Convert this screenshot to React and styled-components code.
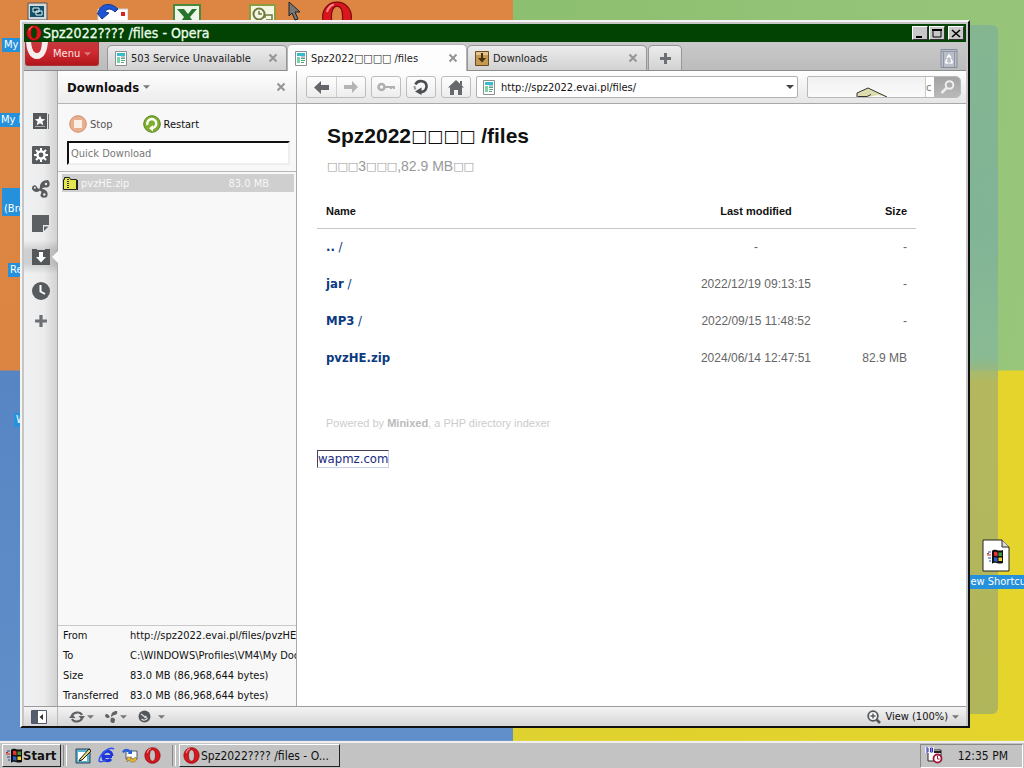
import React from "react";
import styled, { createGlobalStyle, css } from "styled-components";

const UI_FONT = '"DejaVu Sans Condensed", "DejaVu Sans", "Noto Sans", sans-serif';
const PAGE_FONT = '"Liberation Sans", "DejaVu Sans", sans-serif';

const GlobalStyle = createGlobalStyle`
  * { box-sizing: border-box; }
  body { margin: 0; font-family: ${UI_FONT}; font-size: 11px; color: #111; }
  button, input { font: inherit; color: inherit; margin: 0; }
  button { padding: 0; border: 0; background: none; white-space: nowrap; }
  svg { display: block; flex: none; }
`;

/* ---------- desktop ---------- */

const Screen = styled.div`
  display: flex;
  flex-direction: column;
  height: 100vh;
  overflow: hidden;
`;

const Desktop = styled.main`
  position: relative;
  flex: 1;
  min-height: 0;
  overflow: hidden;
  background:
    linear-gradient(#dd8643, #dc8542) 0 0 / 50.1% 50% no-repeat,
    linear-gradient(100deg, #8dbf70, #98c67b) 100% 0 / 50% 50% no-repeat,
    linear-gradient(#5785c4, #618fc9) 0 100% / 50.1% 51% no-repeat,
    linear-gradient(90deg, #dfd12f, #e4d42c) 100% 100% / 50% 51% no-repeat;
`;

const Ribbon = styled.div`
  position: absolute;
  top: 25px;
  right: 26px;
  bottom: 27px;
  width: 60px;
  border-radius: 6px;
  background: linear-gradient(#7fb297cc, #7cb09dcc 30%, #86b89acc 48%, #a8b06acc 52%, #a3ae66cc);
`;

const Shortcut = styled.button`
  position: absolute;
  left: ${(p) => p.$x}px;
  top: ${(p) => p.$y}px;
  display: flex;
  flex-direction: column;
  align-items: center;
  gap: 3px;
`;

const ShortcutLabel = styled.span`
  padding: 0 2px;
  background: #2590dc;
  color: #fff;
  line-height: 14px;
  text-align: center;
  white-space: pre;
`;

const Pointer = styled.div`
  position: absolute;
  left: 288px;
  top: 1px;
  z-index: 3;
`;

/* ---------- window ---------- */

const Window = styled.section`
  position: absolute;
  inset: 20px 54px 13px 20px;
  display: flex;
  flex-direction: column;
  padding: 2px 2px 0;
  background: #c6c6c6;
  border: 2px solid;
  border-color: #f4f4f4 #111 #111 #f4f4f4;
  overflow: hidden;
`;

const TitleBar = styled.header`
  display: flex;
  align-items: center;
  flex: none;
  height: 18px;
  padding: 0 2px;
  gap: 1px;
  background: #024202;
  color: #eaffea;
`;

const Title = styled.h1`
  flex: 1;
  margin: 0;
  font-size: 14px;
  font-weight: normal;
  line-height: 18px;
  -webkit-text-stroke: 0.3px #eaffea;
`;

const Caption = styled.button`
  display: grid;
  place-items: center;
  width: 16px;
  height: 14px;
  background: #c8c8c8;
  border: 1px solid;
  border-color: #fff #333 #333 #fff;
  margin-left: ${(p) => (p.$apart ? 2 : 0)}px;
`;

const TabStrip = styled.div`
  display: flex;
  align-items: flex-end;
  flex: none;
  height: 29px;
  padding-right: 8px;
  background: linear-gradient(#c9c9c9, #bcbcbc);
  border-bottom: 1px solid #8c8c8c;
`;

const MenuButton = styled.button`
  display: flex;
  align-items: center;
  align-self: flex-start;
  width: 74px;
  height: 24px;
  margin: 0 8px 0 1px;
  gap: 4px;
  overflow: hidden;
  color: #fbe6e6;
  border: 1px solid #a33;
  border-top: 0;
  border-radius: 0 0 3px 3px;
  background: linear-gradient(#c23a3f, #cf2a30 45%, #b0161c);
`;

const Tab = styled.div`
  display: flex;
  align-items: center;
  width: 180px;
  height: 25px;
  padding: 0 8px 0 7px;
  border: 1px solid #979797;
  border-bottom: 0;
  border-radius: 5px 5px 0 0;
  background: linear-gradient(#ececec, #d2d2d2);
  ${(p) =>
    p.$active &&
    css`
      height: 27px;
      margin-bottom: -1px;
      background: #fdfdfd;
      border-color: #b5b5b5;
    `}
`;

const TabName = styled.button`
  display: flex;
  align-items: center;
  flex: 1;
  gap: 4px;
  color: #222;
`;

const NewTab = styled.button`
  display: grid;
  place-items: center;
  width: 34px;
  height: 25px;
  margin-left: 1px;
  border: 1px solid #979797;
  border-bottom: 0;
  border-radius: 5px 5px 0 0;
  background: linear-gradient(#ececec, #d2d2d2);
`;

const Trash = styled.button`
  margin: 0 0 2px auto;
`;

const Body = styled.div`
  display: flex;
  flex: 1;
  min-height: 0;
`;

/* ---------- side rail ---------- */

const Rail = styled.nav`
  display: flex;
  flex-direction: column;
  align-items: stretch;
  width: 34px;
  padding-top: 33px;
  background: linear-gradient(90deg, #eff1f3, #ececec 60%, #d2d2d2);
  border-right: 1px solid #a9a9a9;
`;

const RailButton = styled.button`
  position: relative;
  display: grid;
  place-items: center;
  height: ${(p) => (p.$short ? 26 : 34)}px;
  ${(p) =>
    p.$active &&
    css`
      background: linear-gradient(#0000, #0002 30%, #0002 70%, #0000);
      &::after {
        content: "";
        position: absolute;
        right: -1px;
        top: 11px;
        border: 6px solid transparent;
        border-left-width: 0;
        border-right-color: #fafafa;
      }
    `}
`;

/* ---------- downloads panel ---------- */

const Panel = styled.aside`
  display: flex;
  flex-direction: column;
  width: 239px;
  background: #f8f8f8;
  border-right: 1px solid #a9a9a9;
`;

const PanelHead = styled.header`
  display: flex;
  align-items: center;
  justify-content: space-between;
  height: 33px;
  padding: 0 10px 0 9px;
  background: linear-gradient(#fefefe, #ececec);
  border-bottom: 1px solid #b5b5b5;
`;

const PanelTitle = styled.button`
  display: flex;
  align-items: center;
  gap: 4px;
  font-size: 13px;
  font-weight: bold;
`;

const PanelTools = styled.div`
  display: flex;
  flex-direction: column;
  height: 68px;
  padding: 9px 6px 0 9px;
  gap: 6px;
  border-bottom: 1px solid #b5b5b5;
`;

const Actions = styled.div`
  display: flex;
  gap: 26px;
`;

const Action = styled.button`
  display: flex;
  align-items: center;
  height: 22px;
  padding: 0 2px;
  gap: 3px;
  color: ${(p) => (p.disabled ? "#555" : "#111")};
`;

const QuickInput = styled.input`
  width: 100%;
  height: 24px;
  padding: 0 2px;
  background: #fff;
  border: 2px solid;
  border-color: #111 #eee #eee #111;
  outline: 0;
  &::placeholder { color: #777; opacity: 1; }
`;

const TransferList = styled.ul`
  flex: 1;
  min-height: 0;
  margin: 0;
  padding: 2px 2px 0 4px;
  list-style: none;
`;

const Transfer = styled.li`
  display: flex;
  align-items: center;
  height: 18px;
  gap: 3px;
  padding: 0 25px 0 1px;
  background: #cfcfcf;
  color: #f6f6f6;
`;

const TransferName = styled.span`
  flex: 1;
`;

const Details = styled.dl`
  display: grid;
  grid-template-columns: 67px 1fr;
  grid-auto-rows: 20px;
  margin: 0;
  padding-left: 5px;
  overflow: hidden;
  line-height: 20px;
  white-space: nowrap;
  border-top: 1px solid #c9c9c9;
`;

const Term = styled.dt``;

const Value = styled.dd`
  margin: 0;
`;

/* ---------- browser view ---------- */

const View = styled.div`
  display: flex;
  flex-direction: column;
  flex: 1;
  min-width: 0;
  background: #fff;
`;

const Toolbar = styled.div`
  display: flex;
  align-items: center;
  flex: none;
  height: 33px;
  padding: 0 5px 0 9px;
  gap: 5px;
  background: linear-gradient(#fefefe, #e6e6e6);
  border-bottom: 1px solid #a9a9a9;
`;

const ToolGroup = styled.div`
  display: flex;
  height: 22px;
  border: 1px solid #bdbdbd;
  border-radius: 3px;
  background: linear-gradient(#fefefe, #ededed);
`;

const Tool = styled.button`
  display: grid;
  place-items: center;
  width: ${(p) => (p.$wide ? 29 : 28)}px;
  & + & { border-left: 1px solid #cfcfcf; }
`;

const Address = styled.div`
  display: flex;
  align-items: center;
  flex: 1;
  height: 22px;
  margin-right: 4px;
  padding: 0 3px 0 6px;
  gap: 6px;
  background: #fff;
  border: 1px solid #b0b0b0;
  border-radius: 2px;
`;

const AddressInput = styled.input`
  flex: 1;
  min-width: 0;
  padding: 0;
  border: 0;
  outline: 0;
  background: none;
`;

const Search = styled.form`
  position: relative;
  display: flex;
  width: 154px;
  height: 22px;
  border: 1px solid #b9b9b9;
  border-radius: 2px 5px 5px 2px;
  background: linear-gradient(#f1f1f1, #fbfbfb);
  overflow: hidden;
`;

const SearchInput = styled.input`
  flex: 1;
  min-width: 0;
  padding: 0 4px;
  border: 0;
  outline: 0;
  background: none;
`;

const SearchClip = styled.span`
  display: flex;
  align-items: center;
  width: 9px;
  background: #fff;
  border-left: 1px solid #c9c9c9;
  color: #777;
`;

const SearchButton = styled.button`
  display: grid;
  place-items: center;
  width: 26px;
  background: linear-gradient(#a3a3a3, #b9b9b9);
`;

const Overlay = styled.div`
  position: absolute;
  right: 72px;
  bottom: 0;
`;

/* ---------- directory page ---------- */

const Page = styled.article`
  flex: 1;
  min-height: 0;
  padding: 19px 50px 0 20px;
  font-family: ${PAGE_FONT};
`;

const Heading = styled.h2`
  margin: 0 0 7px;
  padding-left: 10px;
  font-size: 21px;
  line-height: 26px;
`;

const Boxes = styled.span`
  font-family: "DejaVu Sans", sans-serif;
  font-weight: normal;
  font-size: ${(p) => p.$size}px;
  line-height: 1;
  vertical-align: 1px;
`;

const Summary = styled.p`
  margin: 0 0 22px;
  padding-left: 10px;
  font-size: 14px;
  line-height: 20px;
  color: #999;
`;

const Listing = styled.table`
  width: 100%;
  border-collapse: collapse;
  font-size: 12px;
`;

const HeadCell = styled.th`
  height: 30px;
  padding: 0 9px 4px;
  font-size: 11px;
  text-align: ${(p) => p.$align || "left"};
  width: ${(p) => p.$width || "auto"};
  border-bottom: 1px solid #c6c6c6;
`;

const Cell = styled.td`
  height: 37px;
  padding: 0 9px;
  color: #666;
  text-align: ${(p) => p.$align || "left"};
`;

const FileLink = styled.a`
  font-family: ${UI_FONT};
  font-size: 13px;
  color: #0b3a80;
  text-decoration: none;
`;

const Credit = styled.p`
  margin: 39px 0 19px;
  padding-left: 9px;
  font-size: 11px;
  line-height: 16px;
  color: #ccc;
`;

const CreditLink = styled.a`
  font-weight: bold;
  color: #bbb;
  text-decoration: none;
`;

const SiteLink = styled.a`
  display: inline-block;
  border: 1px solid;
  border-color: #445 #c9d3ea #c9d3ea #445;
  font-family: ${UI_FONT};
  font-size: 13px;
  line-height: 16px;
  color: #1a2c80;
  text-decoration: none;
`;

/* ---------- status bar and taskbar ---------- */

const StatusBar = styled.footer`
  display: flex;
  align-items: center;
  flex: none;
  height: 20px;
  background: linear-gradient(#f4f4f4, #d6d6d6);
  border-top: 1px solid #9c9c9c;
`;

const PanelToggle = styled.button`
  display: grid;
  place-items: center;
  width: 34px;
  height: 19px;
  padding-right: 4px;
  border-right: 1px solid #bbb;
`;

const StatusTools = styled.div`
  display: flex;
  flex: 1;
  padding-left: 11px;
  gap: 11px;
`;

const StatusButton = styled.button`
  display: flex;
  align-items: center;
  gap: ${(p) => p.$gap || 2}px;
`;

const Zoom = styled(StatusButton)`
  padding-right: 7px;
`;

const TaskBar = styled.footer`
  display: flex;
  align-items: center;
  flex: none;
  height: 27px;
  padding: 0 1px 0 2px;
  background: #c3c3c3;
  border-top: 2px solid #eee;
`;

const raised = css`
  border: 1px solid;
  border-color: #fff #222 #222 #fff;
`;

const StartButton = styled.button`
  display: flex;
  align-items: center;
  width: 59px;
  height: 23px;
  padding-left: 3px;
  font-size: 13px;
  font-weight: bold;
  ${raised}
`;

const Grip = styled.span`
  width: 4px;
  height: 21px;
  margin: 0 3px 0 2px;
  border-left: 1px solid #888;
  border-right: 1px solid #fff;
`;

const QuickLaunch = styled.nav`
  display: flex;
  gap: 6px;
  padding: 0 9px 0 5px;
`;

const TaskButton = styled.button`
  display: flex;
  align-items: center;
  width: 161px;
  height: 23px;
  padding-left: 3px;
  gap: 1px;
  font-size: 12px;
  ${raised}
`;

const Tray = styled.div`
  display: flex;
  align-items: center;
  justify-content: space-between;
  width: 103px;
  height: 24px;
  margin-left: auto;
  padding: 0 14px 0 4px;
  font-size: 12px;
  border: 1px solid;
  border-color: #888 #fff #fff #888;
`;

/* ---------- drawings ---------- */

const OperaMark = ({ size = 16 }) => (
  <svg width={size} height={size} viewBox="0 0 16 16" aria-hidden="true">
    <path fillRule="evenodd" fill="#d8161c" stroke="#7d0a0e" strokeWidth=".6" d="M8 .6C3.9.6.8 3.8.8 8s3.100 7.400 7.200 7.400 7.200-3.200 7.200-7.400S12.100.6 8 .6zM8 2.600c1.800 0 2.800 2.200 2.800 5.400S9.800 13.400 8 13.400 5.200 11.200 5.200 8 6.200 2.600 8 2.600z" />
    <path d="M3 5.500C3.600 3.400 5 2 6.400 1.700" stroke="#ff8d8d" fill="none" />
  </svg>
);

const Caret = ({ fill = "#777", w = 7 }) => (
  <svg width={w} height="4" viewBox="0 0 8 4" aria-hidden="true"><path d="M0 0h8L4 4z" fill={fill} /></svg>
);

const Cross = () => (
  <svg width="10" height="10" viewBox="0 0 10 10" aria-hidden="true"><path d="M1.500 1.500l7 7M8.500 1.500l-7 7" stroke="#949494" strokeWidth="2" /></svg>
);

const Plus = ({ size = 13 }) => (
  <svg width={size} height={size} viewBox="0 0 13 13" aria-hidden="true"><path d="M5 1h3v4h4v3H8v4H5V8H1V5h4z" fill="#6c6f74" /></svg>
);

const PageIcon = () => (
  <svg width="12" height="15" viewBox="0 0 12 15" aria-hidden="true">
    <path d="M.5.5h11v14H.5z" fill="#fff" stroke="#8b8f91" />
    <path d="M2 2h8v3H2z" fill="#36bccb" />
    <path d="M2 6h3v6H2z" fill="#79d3a5" />
    <path d="M6 7.500h4M6 9.500h4M6 11.500h3" stroke="#52a779" />
    <path d="M6 6h4" stroke="#789" />
  </svg>
);

const BoxIcon = () => (
  <svg width="14" height="15" viewBox="0 0 14 15" aria-hidden="true">
    <path d="M.5.5h13v14H.5z" fill="#c59a55" stroke="#6d4b20" />
    <path d="M1 1h12v3H1z" fill="#e3c58c" />
    <path d="M6 2h2v5h3l-4 4.500L3 7h3z" fill="#49300f" />
  </svg>
);

const RailDraw = {
  Bookmarks: (
    <svg width="18" height="18" viewBox="0 0 18 18"><path d="M1 1h14v16H1z" fill="#55585b" /><path d="M16.500 2v15" stroke="#777" /><path d="M3 14.500h10" stroke="#aaa" /><path d="M8 3.500l1.500 3.400 3.700.3-2.800 2.400.9 3.600L8 11.300l-3.300 1.900.9-3.600-2.800-2.400 3.700-.3z" fill="#fff" /></svg>
  ),
  Widgets: (
    <svg width="18" height="18" viewBox="0 0 18 18"><rect width="18" height="18" rx="1" fill="#585b5e" /><circle cx="9" cy="9" r="3.600" fill="none" stroke="#fff" strokeWidth="2.400" /><path d="M9 2v3M9 13v3M2 9h3M13 9h3M4 4l2.200 2.200M11.800 11.800L14 14M4 14l2.200-2.200M11.800 6.200L14 4" stroke="#fff" strokeWidth="2" /></svg>
  ),
  Unite: (
    <svg width="18" height="18" viewBox="0 0 18 18"><g fill="#595c5f"><path d="M8 10C7 4 10 0 16 0c3 3 2 8-2 7.500-3-.5-4 .5-4.500 3z" /><path d="M9 9c-2 4-7 4-9 0-.5-4 3.500-5 5-2C6 9 7 9 9 8z" /><path d="M8 9c6-.5 9 3 7 8-4 2-8 0-6-3.500C10 12 9 11 8 11z" /></g><circle cx="14" cy="4" r="1.200" fill="#eee" /><circle cx="2.800" cy="7.800" r="1" fill="#eee" /><circle cx="12.300" cy="14.500" r="1.200" fill="#eee" /></svg>
  ),
  Notes: (
    <svg width="17" height="17" viewBox="0 0 17 17"><path d="M0 0h17v10h-6v7H0z" fill="#5c6063" /><path d="M12 11.500h4.500L12 16z" fill="#5c6063" /></svg>
  ),
  Downloads: (
    <svg width="18" height="18" viewBox="0 0 18 18"><path d="M0 1h5v1h8V1h5v16H0z" fill="#55585b" /><path d="M7 4h4v5h3l-5 5.500L4 9h3z" fill="#fff" /></svg>
  ),
  History: (
    <svg width="18" height="18" viewBox="0 0 18 18"><circle cx="9" cy="9" r="9" fill="#585b5e" /><path d="M8.500 3v6.500l4.500 2.500" fill="none" stroke="#fff" strokeWidth="2" /></svg>
  ),
};

const BackArrow = () => (
  <svg width="15" height="13" viewBox="0 0 15 13" aria-hidden="true"><path d="M0 6.500L7 0v4h8v5H7v4z" fill="#63666a" /></svg>
);
const ForwardArrow = () => (
  <svg width="14" height="12" viewBox="0 0 14 12" aria-hidden="true"><path d="M14 6L8 0v4H0v4h8v4z" fill="#b4b4b4" /></svg>
);
const KeyIcon = () => (
  <svg width="18" height="10" viewBox="0 0 18 10" aria-hidden="true"><circle cx="4.500" cy="5" r="3" fill="none" stroke="#b0b0b0" strokeWidth="2.500" /><path d="M8 5h9v2M14 5v2" fill="none" stroke="#b0b0b0" strokeWidth="2.200" /></svg>
);
const ReloadIcon = () => (
  <svg width="16" height="16" viewBox="0 0 16 16" aria-hidden="true"><path d="M2.500 5.500C5 0 14 1.500 13.500 8c-.5 4-3.500 5.500-7 5" fill="none" stroke="#4a4d50" strokeWidth="2.600" /><path d="M8.500 8.500V16L2 12.500z" fill="#4a4d50" /><path d="M1.500 7c0 1.500.3 2.500 1 3.500" stroke="#999" strokeWidth="2" fill="none" /></svg>
);
const HomeIcon = () => (
  <svg width="16" height="15" viewBox="0 0 16 15" aria-hidden="true"><path d="M8 0l8 7.500h-2V15h-4v-5H6v5H2V7.500H0z" fill="#66696c" /><path d="M12 1h2v5l-2-2z" fill="#66696c" /></svg>
);
const SearchIcon = () => (
  <svg width="15" height="14" viewBox="0 0 15 14" aria-hidden="true"><circle cx="9.500" cy="5" r="3.800" fill="none" stroke="#eee" strokeWidth="2" /><path d="M6.500 8L1.500 13" stroke="#eee" strokeWidth="2.500" /></svg>
);
const TrashIcon = () => (
  <svg width="18" height="19" viewBox="0 0 18 19" aria-hidden="true"><path d="M1 .5h16v18H1z" fill="#b9bec8" stroke="#858c9a" /><path d="M1 2.500h16M3.500 3v15M14.500 3v15" stroke="#8f96a4" /><path d="M7 9l2-3 2 3M5.500 14l1.500-4M5.500 14h3M12.500 14l-1.500-4M12.500 14h-3" fill="none" stroke="#fff" strokeWidth="1.500" /></svg>
);
const TentIcon = () => (
  <svg width="32" height="10" viewBox="0 0 32 10" aria-hidden="true"><path d="M1 6L12 1l19 9-9-2-10 2H1z" fill="#dcdcae" /><path d="M1 10V6L12 1l19 9M2 9.500h9l4-2" fill="none" stroke="#333" /></svg>
);
const StopIcon = () => (
  <svg width="18" height="18" viewBox="0 0 18 18" aria-hidden="true"><circle cx="9" cy="9" r="8.300" fill="#e9b08e" stroke="#d28f6c" /><path d="M5 5h8v8H5z" fill="#fbeee6" /></svg>
);
const RestartIcon = () => (
  <svg width="18" height="18" viewBox="0 0 18 18" aria-hidden="true"><circle cx="9" cy="9" r="8.300" fill="#7fae2e" stroke="#5c8620" /><path d="M4.500 10A4.500 4.500 0 1 1 9.500 13" fill="none" stroke="#fff" strokeWidth="2.400" /><path d="M10 10v6.500L6 13.300z" fill="#fff" /></svg>
);
const ZipIcon = () => (
  <svg width="15" height="13" viewBox="0 0 15 13" aria-hidden="true"><path d="M.5 2.500h1v-2h5l1 2h6v10H.5z" fill="#e4e650" stroke="#222" /><path d="M5 2v10" stroke="#333" strokeWidth="2" strokeDasharray="1 1" /><path d="M14.500 3v10" stroke="#222" /></svg>
);
const Flag = ({ size = 17 }) => (
  <svg width={size} height={size} viewBox="0 0 17 17" aria-hidden="true">
    <path d="M5 3c3-3 6 1 11-1v13c-5 2-8-2-11 1z" fill="#111" />
    <path d="M7 4c1.500-.8 2.500 0 3.500.4v4C9 8 8.500 7.500 7 8z" fill="#e33" />
    <path d="M11.500 4.500H15V8h-3.500z" fill="#3a9a3a" />
    <path d="M7 9.500c1.500-.5 2.500 0 3.500.5v4c-1-.5-2-1-3.500-.5z" fill="#2b5fd0" />
    <path d="M11.500 9.500H15V13h-3.500z" fill="#f0d020" />
    <path d="M1 4h3M1 10h3M2 13h2" stroke="#224b9b" />
    <path d="M0 7h4M0 5.500h2" stroke="#c22" />
  </svg>
);
const PanelIcon = () => (
  <svg width="16" height="14" viewBox="0 0 16 14" aria-hidden="true"><path d="M.5.5h15v13H.5z" fill="#fff" stroke="#525968" /><path d="M1 1h6v12H1z" fill="#555c6c" /><path d="M12 4v6L8.500 7z" fill="#333" /></svg>
);
const SyncIcon = () => (
  <svg width="16" height="12" viewBox="0 0 16 12" aria-hidden="true"><path d="M3 6c0-5 8-6 10-2M13 6c0 5-8 6-10 2" fill="none" stroke="#606366" strokeWidth="2.200" /><path d="M9.500 5H16l-3 4zM6.500 7H0l3-4z" fill="#606366" /></svg>
);
const UniteSmall = () => (
  <svg width="13" height="12" viewBox="0 0 13 12" aria-hidden="true"><path d="M6 6c0-4 2-6 6-6 1 3-1 4-3 4zM5 6C3 8 0 7 0 4c2-2 3-1 5 2zM6 7c4-1 5 2 3 5-4 0-4-2-3-5z" fill="#606366" /></svg>
);
const TurboIcon = () => (
  <svg width="13" height="13" viewBox="0 0 13 13" aria-hidden="true"><circle cx="6.500" cy="6.500" r="6" fill="#55585b" /><path d="M3 4l4 3M3.500 9c2 2 5 1 6-1" stroke="#ddd" strokeWidth="1.200" fill="none" /><circle cx="7.500" cy="7" r="1.300" fill="#ddd" /></svg>
);
const ZoomIcon = () => (
  <svg width="14" height="14" viewBox="0 0 14 14" aria-hidden="true"><circle cx="6" cy="6" r="4.800" fill="#f7f7f7" stroke="#55585b" strokeWidth="1.800" /><path d="M9.500 9.500L13 13" stroke="#55585b" strokeWidth="2.600" /><path d="M3.500 6h5M6 3.500v5" stroke="#55585b" strokeWidth="1.400" /></svg>
);
const DesktopIcon = () => (
  <svg width="17" height="17" viewBox="0 0 17 17" aria-hidden="true"><path d="M1 2h14v14H1z" fill="#5bb3cf" stroke="#345" /><path d="M3 5h9v9H3z" fill="#fff" /><path d="M5 12L14 2l2 2-9 9-3 1z" fill="#e8d77a" stroke="#222" /></svg>
);
const IeIcon = () => (
  <svg width="17" height="17" viewBox="0 0 17 17" aria-hidden="true"><path d="M14 9.500H5c0 5 6 5 8 2.500M14 9c0-6.500-9-6.500-9.500.5" fill="none" stroke="#1d36dc" strokeWidth="3" /><path d="M16 2C11-1 1 8 1 14c2 2 5 0 7-1" fill="none" stroke="#2e54ef" strokeWidth="1.500" /></svg>
);
const MailIcon = () => (
  <svg width="17" height="17" viewBox="0 0 17 17" aria-hidden="true"><path d="M5 4h11v8H5z" fill="#fff" stroke="#456" /><path d="M1 5c2-4 6-4 9-1l1-2v5H6l2-1C6 4 4 4 3 6z" fill="#2a62d8" /><path d="M16 12c-2 4-6 4-8 1l-2 2v-5h5l-2 1c2 2 4 1 5-1z" fill="#e6b62b" stroke="#654" strokeWidth=".5" /></svg>
);
const TrayIcon = () => (
  <svg width="18" height="17" viewBox="0 0 18 17" aria-hidden="true"><path d="M3 3h13v11H3z" fill="#fff" stroke="#222" /><path d="M3 5h13" stroke="#222" strokeWidth="2" /><path d="M0 0h9v6H0z" fill="#eef" /><path d="M1 1h2v4H1M3 3H1M5.500 1h2v4h-2zM5.500 3h2" stroke="#33a" fill="none" /><circle cx="12.500" cy="11.500" r="4" fill="#fff" stroke="#a1193a" strokeWidth="1.800" /><path d="M12.500 9v3h2" stroke="#a1193a" fill="none" /></svg>
);
const ComputerIcon = () => (
  <svg width="22" height="28" viewBox="0 0 22 28" aria-hidden="true"><path d="M1 1h19v17H1z" fill="#d5d8d8" stroke="#555" /><path d="M3 4h14v11H3z" fill="#14516b" /><path d="M6 6h6v4H6zM9 9h6v4H9z" fill="#143a50" stroke="#dff" /></svg>
);
const OutlookIcon = () => (
  <svg width="32" height="28" viewBox="0 0 32 28" aria-hidden="true"><path d="M2 6h30v20H2z" fill="#fff" stroke="#ccc" /><path d="M25 9h4v4h-4z" fill="#d22" /><path d="M2 11C3 1 14-2 22 6l-3 3c-4-4-8-4-10 0l4 1-7 6-5-6z" fill="#1e55d6" stroke="#123a90" /></svg>
);
const ExcelIcon = () => (
  <svg width="28" height="28" viewBox="0 0 28 28" aria-hidden="true"><path d="M1 1h26v26H1z" fill="#eef6ea" stroke="#4b8a3e" strokeWidth="2" /><path d="M4 5h7l4 5 4-5h5l-7 8 7 10h-7l-4-6-4 6H4l7-10z" fill="#27742d" /></svg>
);
const OrganizerIcon = () => (
  <svg width="27" height="28" viewBox="0 0 27 28" aria-hidden="true"><path d="M1 1h25v26H1z" fill="#f5f5e4" stroke="#8c9c3f" strokeWidth="2" /><circle cx="10" cy="10" r="5.500" fill="none" stroke="#6b7a3a" strokeWidth="2" /><path d="M10 7v3h3M16 14v-3h7v5h-6" stroke="#6b7a3a" strokeWidth="1.500" fill="none" /></svg>
);
const DocIcon = () => (
  <svg width="28" height="33" viewBox="0 0 28 33" aria-hidden="true"><path d="M1 1h19l7 7v24H1z" fill="#fff" stroke="#222" /><path d="M20 1v7h7" fill="#ddd" stroke="#222" /><g transform="translate(5 9)"><Flag size={17} /></g></svg>
);

/* ---------- data ---------- */

const shortcuts = [
  { name: "Computer", x: 27, y: 2, art: <ComputerIcon /> },
  { name: "Outlook", x: 96, y: 3, art: <OutlookIcon /> },
  { name: "Excel", x: 173, y: 4, art: <ExcelIcon /> },
  { name: "Organizer", x: 249, y: 4, art: <OrganizerIcon /> },
  { name: "Opera", x: 321, y: 1, art: <OperaMark size={32} /> },
  { x: 2, y: 38, label: "My PC" },
  { x: -1, y: 113, label: "My Files" },
  { x: 2, y: 188, label: "PC\n(Browser)" },
  { x: 8, y: 263, label: "Recycle" },
  { x: 14, y: 413, label: "WinZip" },
  { x: 961, y: 539, art: <DocIcon />, label: "New Shortcut" },
];

const tabs = [
  { icon: <PageIcon />, text: "503 Service Unavailable" },
  { icon: <PageIcon />, text: "Spz2022□□□□ /files", active: true },
  { icon: <BoxIcon />, text: "Downloads" },
];

const details = [
  ["From", "http://spz2022.evai.pl/files/pvzHE.zip"],
  ["To", "C:\\WINDOWS\\Profiles\\VM4\\My Documents"],
  ["Size", "83.0 MB (86,968,644 bytes)"],
  ["Transferred", "83.0 MB (86,968,644 bytes)"],
];

const files = [
  { name: "..", dir: true, date: "-", size: "-" },
  { name: "jar", dir: true, date: "2022/12/19 09:13:15", size: "-" },
  { name: "MP3", dir: true, date: "2022/09/15 11:48:52", size: "-" },
  { name: "pvzHE.zip", date: "2024/06/14 12:47:51", size: "82.9 MB" },
];

const BrowserWindow = () => (
  <Window aria-label="Opera">
    <TitleBar>
      <OperaMark size={16} />
      <Title>Spz2022???? /files - Opera</Title>
      <Caption aria-label="Minimize"><svg width="10" height="9"><path d="M1 7h6v2H1z" /></svg></Caption>
      <Caption aria-label="Maximize"><svg width="10" height="9"><path d="M1 1h8v7H1z" fill="none" stroke="#000" /><path d="M0 1h10" stroke="#000" strokeWidth="2" /></svg></Caption>
      <Caption aria-label="Close" $apart><svg width="10" height="9"><path d="M1 1l8 7M9 1L1 8" stroke="#000" strokeWidth="1.600" /></svg></Caption>
    </TitleBar>

    <TabStrip>
      <MenuButton>
        <svg width="23" height="23" viewBox="0 0 23 23" aria-hidden="true"><path d="M0-3c0 10 3 20 11 20S22 7 22-3h-6c0 8-1 14-5 14S5 5 5-3z" fill="#f7eeee" /></svg>
        Menu
        <Caret fill="#dc7a7a" />
      </MenuButton>
      {tabs.map((t) => (
        <Tab key={t.text} $active={t.active}>
          <TabName>{t.icon}{t.text}</TabName>
          <button aria-label={"Close " + t.text}><Cross /></button>
        </Tab>
      ))}
      <NewTab aria-label="New tab"><Plus /></NewTab>
      <Trash aria-label="Closed tabs"><TrashIcon /></Trash>
    </TabStrip>

    <Body>
      <Rail aria-label="Panels">
        {Object.entries(RailDraw).map(([name, art]) => (
          <RailButton key={name} aria-label={name} $active={name === "Downloads"}>{art}</RailButton>
        ))}
        <RailButton aria-label="Add panel" $short><Plus size={14} /></RailButton>
      </Rail>

      <Panel>
        <PanelHead>
          <PanelTitle>Downloads <Caret /></PanelTitle>
          <button aria-label="Close panel"><Cross /></button>
        </PanelHead>
        <PanelTools>
          <Actions>
            <Action disabled><StopIcon />Stop</Action>
            <Action><RestartIcon />Restart</Action>
          </Actions>
          <QuickInput aria-label="Quick Download" placeholder="Quick Download" />
        </PanelTools>
        <TransferList>
          <Transfer><ZipIcon /><TransferName>pvzHE.zip</TransferName><span>83.0 MB</span></Transfer>
        </TransferList>
        <Details>
          {details.map(([term, value]) => (
            <React.Fragment key={term}><Term>{term}</Term><Value>{value}</Value></React.Fragment>
          ))}
        </Details>
      </Panel>

      <View>
        <Toolbar>
          <ToolGroup>
            <Tool $wide aria-label="Back"><BackArrow /></Tool>
            <Tool $wide aria-label="Forward"><ForwardArrow /></Tool>
          </ToolGroup>
          <ToolGroup><Tool aria-label="Password"><KeyIcon /></Tool></ToolGroup>
          <ToolGroup><Tool aria-label="Reload"><ReloadIcon /></Tool></ToolGroup>
          <ToolGroup><Tool aria-label="Home"><HomeIcon /></Tool></ToolGroup>
          <Address>
            <PageIcon />
            <AddressInput aria-label="Address" defaultValue="http://spz2022.evai.pl/files/" />
            <button aria-label="Address history"><Caret fill="#444" w={8} /></button>
          </Address>
          <Search>
            <SearchInput aria-label="Search" />
            <SearchClip>c</SearchClip>
            <SearchButton type="button" aria-label="Search"><SearchIcon /></SearchButton>
            <Overlay><TentIcon /></Overlay>
          </Search>
        </Toolbar>

        <Page>
          <Heading>Spz2022<Boxes $size={17}>□□□□</Boxes> /files</Heading>
          <Summary><Boxes $size={11}>□□□</Boxes>3<Boxes $size={11}>□□□</Boxes>,82.9 MB<Boxes $size={11}>□□</Boxes></Summary>
          <Listing>
            <thead>
              <tr>
                <HeadCell>Name</HeadCell>
                <HeadCell $align="center" $width="140px">Last modified</HeadCell>
                <HeadCell $align="right" $width="90px">Size</HeadCell>
              </tr>
            </thead>
            <tbody>
              {files.map((f) => (
                <tr key={f.name}>
                  <Cell><FileLink href="#"><b>{f.name}</b>{f.dir && " /"}</FileLink></Cell>
                  <Cell $align="center">{f.date}</Cell>
                  <Cell $align="right">{f.size}</Cell>
                </tr>
              ))}
            </tbody>
          </Listing>
          <Credit>Powered by <CreditLink href="#">Minixed</CreditLink>, a PHP directory indexer</Credit>
          <SiteLink href="#">wapmz.com</SiteLink>
        </Page>
      </View>
    </Body>

    <StatusBar>
      <PanelToggle aria-label="Toggle panels"><PanelIcon /></PanelToggle>
      <StatusTools>
        <StatusButton aria-label="Synchronize"><SyncIcon /><Caret /></StatusButton>
        <StatusButton aria-label="Unite"><UniteSmall /><Caret /></StatusButton>
        <StatusButton aria-label="Turbo" $gap={7}><TurboIcon /><Caret /></StatusButton>
      </StatusTools>
      <Zoom $gap={4}><ZoomIcon />View (100%) <Caret /></Zoom>
    </StatusBar>
  </Window>
);

export default function App() {
  return (
    <Screen>
      <GlobalStyle />
      <Desktop>
        <Ribbon />
        {shortcuts.map((s) => (
          <Shortcut key={s.name || s.label} $x={s.x} $y={s.y} aria-label={s.name || s.label}>
            {s.art}
            {s.label && <ShortcutLabel>{s.label}</ShortcutLabel>}
          </Shortcut>
        ))}
        <BrowserWindow />
        <Pointer>
          <svg width="13" height="20" viewBox="0 0 13 20" aria-hidden="true"><path d="M1 1v14l3-3 3 7 3-1-3-7h5z" fill="#777" stroke="#222" /></svg>
        </Pointer>
      </Desktop>
      <TaskBar>
        <StartButton><Flag size={17} />Start</StartButton>
        <Grip />
        <QuickLaunch aria-label="Quick launch">
          <button aria-label="Show desktop"><DesktopIcon /></button>
          <button aria-label="Internet Explorer"><IeIcon /></button>
          <button aria-label="Mail"><MailIcon /></button>
          <button aria-label="Opera"><OperaMark size={17} /></button>
        </QuickLaunch>
        <Grip />
        <TaskButton><OperaMark size={17} />Spz2022???? /files - O...</TaskButton>
        <Tray><TrayIcon /><time>12:35 PM</time></Tray>
      </TaskBar>
    </Screen>
  );
}
